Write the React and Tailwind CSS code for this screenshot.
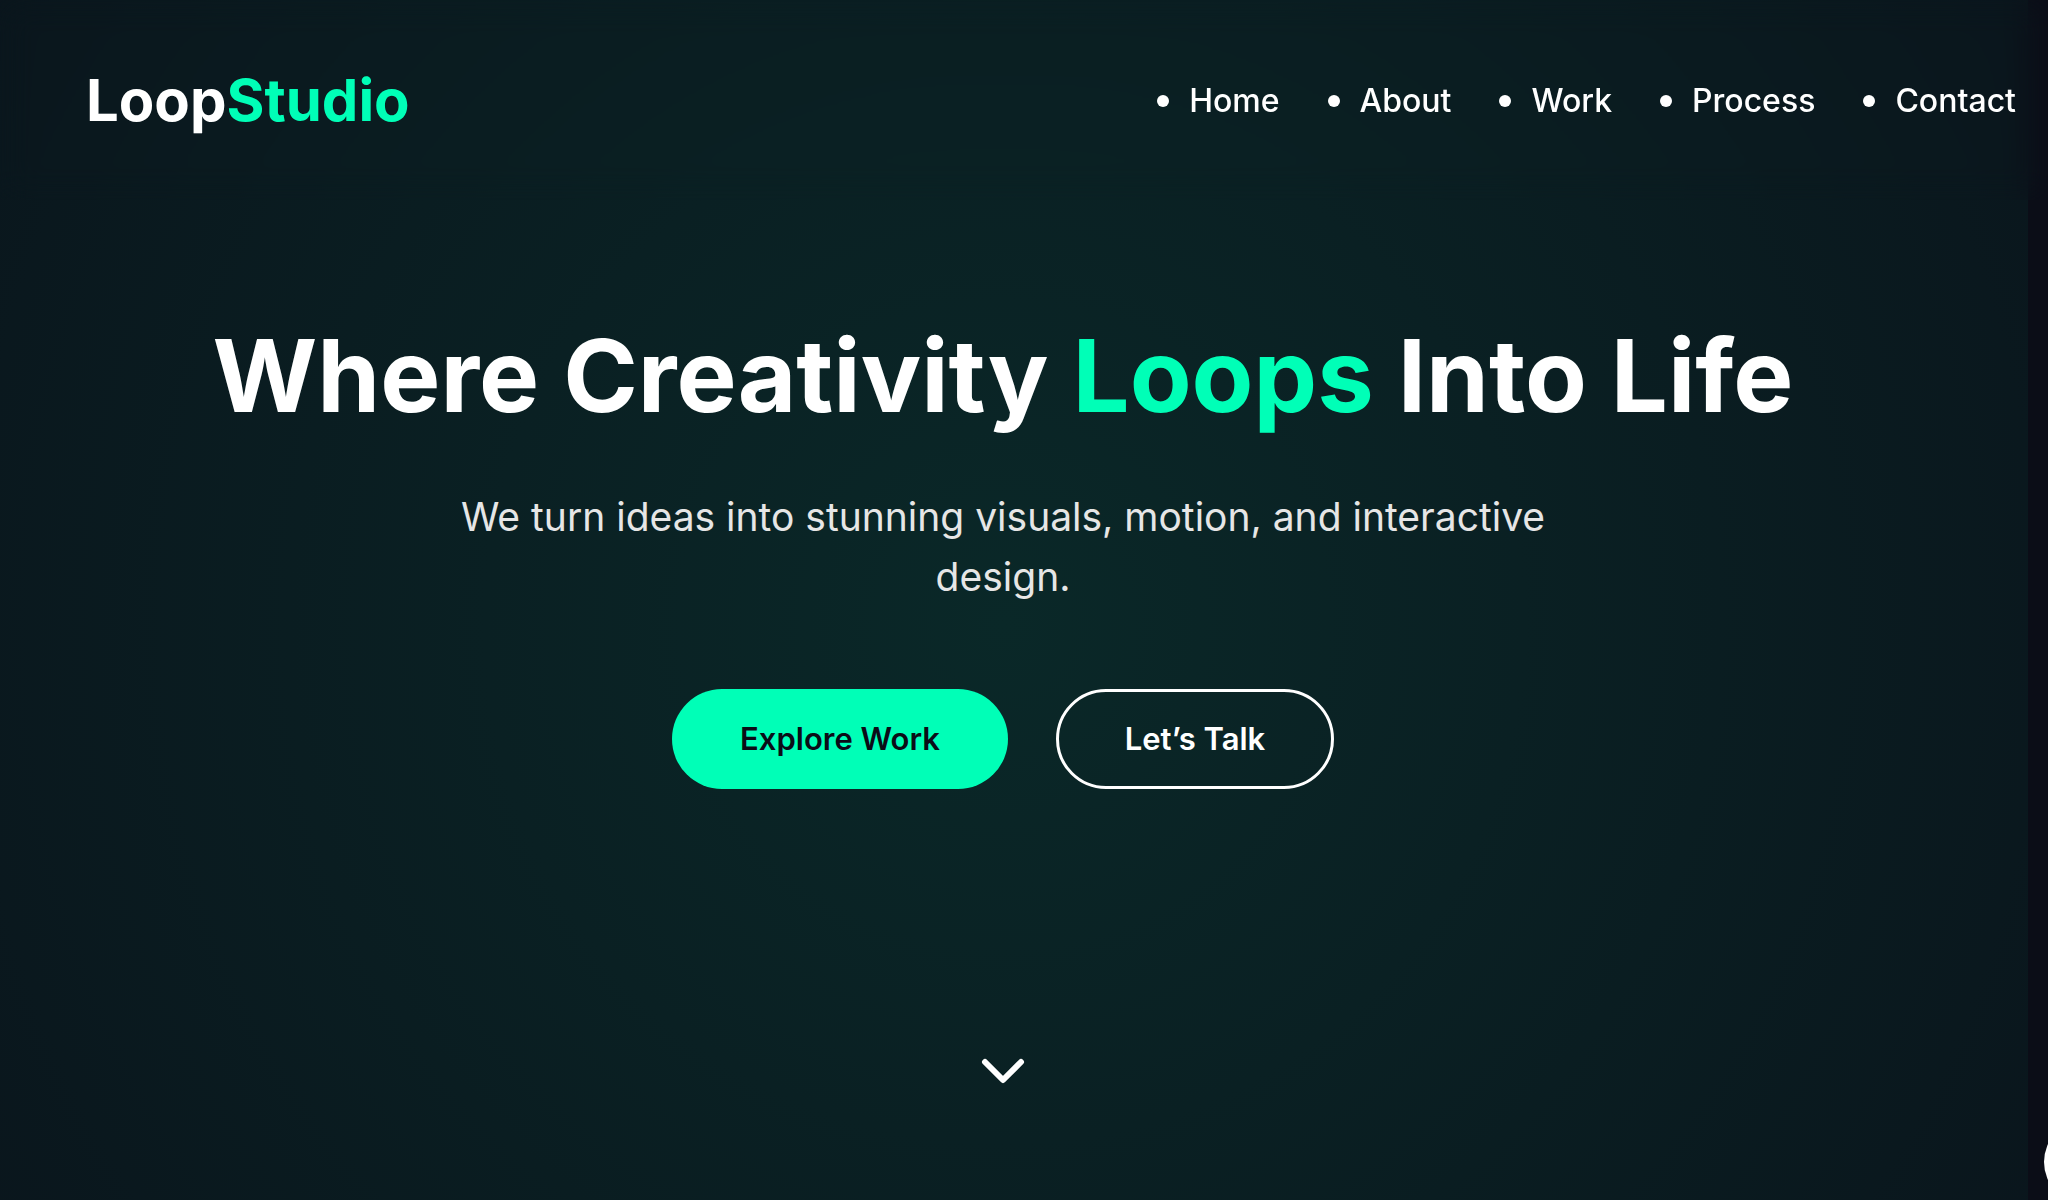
import { ChevronDown } from "lucide-react";

const links = ["Home", "About", "Work", "Process", "Contact"];

export default function App() {
  return (
    <div className="relative flex min-h-screen flex-col overflow-hidden bg-[#0b0d17] font-[Inter,sans-serif] text-white">
      {/* Hero glow, slightly wider than the content column */}
      <div className="absolute inset-y-0 -left-5 right-5 bg-[radial-gradient(circle_1750px_at_50%_52%,#0a2828_0%,#0a0d17_100%)]" />

      <header className="relative flex h-[200px] items-center justify-between pl-[86px] pr-8 backdrop-blur-lg">
        <a href="#home" className="text-[58px] font-bold leading-none">
          Loop<span className="text-[#00ffb7]">Studio</span>
        </a>
        <nav>
          <ul className="flex gap-12 pt-0.5 text-[32px] font-medium">
            {links.map((label) => (
              <li
                key={label}
                className="flex items-center gap-5 before:size-3 before:rounded-full before:bg-white"
              >
                <a href={"#" + label.toLowerCase()}>{label}</a>
              </li>
            ))}
          </ul>
        </nav>
      </header>

      <main className="relative flex flex-1 flex-col items-center pr-[42px] text-center">
        <h1 className="mt-[115px] text-[101px] font-bold leading-[120px]">
          Where Creativity <span className="text-[#00ffb7]">Loops</span> Into Life
        </h1>
        <p className="mt-[52px] max-w-[1120px] text-[39px] leading-[60px] text-[#e6e6e6]">
          We turn ideas into stunning visuals, motion, and interactive design.
        </p>
        <div className="mt-[82px] flex gap-12">
          <button className="h-[100px] w-[336px] rounded-full bg-[#00ffb7] text-[31px] font-semibold text-[#0b0d17]">
            Explore Work
          </button>
          <button className="h-[100px] w-[278px] rounded-full border-3 border-white text-[31px] font-semibold">
            Let’s Talk
          </button>
        </div>
        <a href="#work" aria-label="Scroll down" className="mt-auto mb-[93px]">
          <ChevronDown size={72} />
        </a>
      </main>

      {/* Floating round button peeking in from the right edge */}
      <button aria-label="Back to top" className="absolute -right-20 -bottom-1 size-[84px] rounded-full bg-white" />
    </div>
  );
}
